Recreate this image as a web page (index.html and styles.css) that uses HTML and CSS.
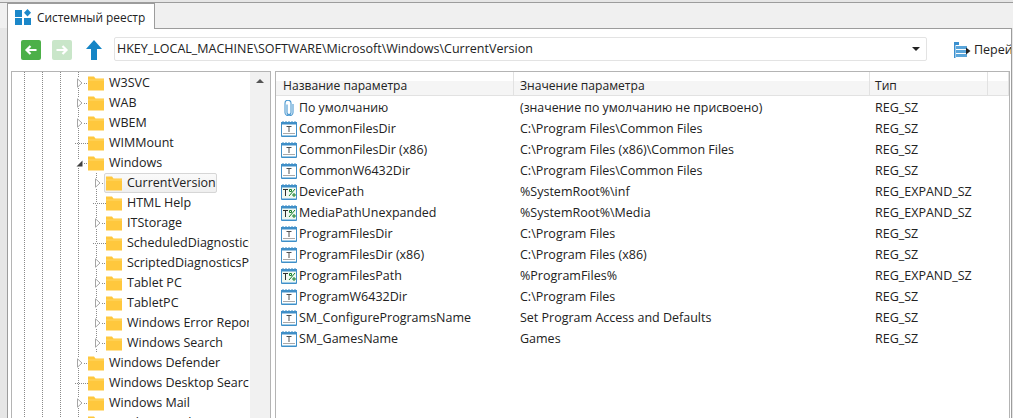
FILE: index.html
```html
<!DOCTYPE html>
<html lang="ru">
<head>
<meta charset="utf-8">
<title>Системный реестр</title>
<link rel="stylesheet" href="styles.css">
</head>
<body>
<svg class="defs" width="0" height="0">
  <symbol id="folder" viewBox="0 0 16 16">
    <path d="M0 1.500h6l1.500 2H16v12H0z" fill="#ffc83d"/>
    <path d="M0 5h16" stroke="#ffd769" stroke-width="1"/>
  </symbol>
  <symbol id="closed" viewBox="0 0 13 10">
    <path d="M2.500.8 7 5 2.500 9.200z" fill="#fff" stroke="#a6a6a6"/>
    <path d="M9 5.500h1M11 5.500h1" stroke="#8a8a8a"/>
  </symbol>
  <symbol id="open" viewBox="0 0 13 7">
    <path d="M7.500.5v6h-6z" fill="#404040"/>
    <path d="M9 3.500h1M11 3.500h1" stroke="#8a8a8a"/>
  </symbol>
  <symbol id="txt" viewBox="0 0 16 16">
    <path d="M.5 2.500h15v13H.5z" fill="#fff" stroke="#3f8fc8"/>
    <path d="M0 1h16v2.500H0z" fill="#3f8fc8"/>
    <path d="M2 0v1M5 0v1M8 0v1M11 0v1M14 0v1" stroke="#3f8fc8"/>
    <path d="M2 12.500h12" stroke="#a9a9a9"/>
    <path d="M1 14.500h14" stroke="#9ccbe8"/>
    <path d="M5.500 5.500h5M8 5.500V11" stroke="#505050"/>
  </symbol>
  <symbol id="exp" viewBox="0 0 16 16">
    <path d="M.5 2.500h15v13H.5z" fill="#f1f9f1" stroke="#3f8fc8"/>
    <path d="M0 1h16v2.500H0z" fill="#3f8fc8"/>
    <path d="M2 0v1M5 0v1M8 0v1M11 0v1M14 0v1" stroke="#3f8fc8"/>
    <path d="M1 14.500h14" stroke="#9ccbe8"/>
    <path d="M2 5.500h5M4.500 5.500V12" stroke="#303030"/>
    <path d="M8 12l6-7M8.500 5.500h2v2h-2zM12 10h2v2h-2z" stroke="#17802f" fill="none"/>
  </symbol>
  <symbol id="clip" viewBox="0 0 16 16">
    <path d="M6 4.500v8a2 2 0 0 0 4 0V3a3 2.700 0 0 0-6 0v9.500a4 3.300 0 0 0 8 0V4" fill="none" stroke="#4a98d0" stroke-width="1.100"/>
  </symbol>
</svg>

<div class="window">
  <div class="tabstrip">
    <div class="tab">
      <svg class="tab-icon" viewBox="0 0 16 16" width="16" height="16">
        <path d="M0 1h7v7H0zM0 9h7v7H0zM9 9h7v7H9z" fill="#1b87c9"/>
        <path d="M12.500 0 16 3.700 12.500 7.400 9 3.700z" fill="#1b87c9"/>
      </svg>
      <span>Системный реестр</span>
    </div>
  </div>
  <div class="page">
    <div class="toolbar">
      <button class="nav back" type="button" aria-label="Назад">
        <svg viewBox="0 0 20 20" width="20" height="20"><path d="M15.500 10H6M9.500 6 5.500 10l4 4" fill="none" stroke="#fff" stroke-width="2.200"/></svg>
      </button>
      <button class="nav fwd" type="button" aria-label="Вперёд">
        <svg viewBox="0 0 20 20" width="20" height="20"><path d="M4.500 10H14M10.500 6l4 4-4 4" fill="none" stroke="#fff" stroke-width="2.200"/></svg>
      </button>
      <svg class="up" viewBox="0 0 16 20" width="16" height="20"><path d="M8 0 16 9H11V20H5V9H0z" fill="#1585c6"/></svg>
      <div class="path">
        <span class="path-text">HKEY_LOCAL_MACHINE\SOFTWARE\Microsoft\Windows\CurrentVersion</span>
        <span class="caret"></span>
      </div>
      <div class="jump">
        <svg viewBox="0 0 17 17" width="17" height="17">
          <path d="M0 0h5v3H0zM0 3h1.500v13H0z" fill="#3a8fcf"/>
          <path d="M2 4h11v3H2zM2 8h11v3H2zM2 12h11v3H2z" fill="#5aa5da"/>
          <path d="M12 5.500 16.500 9 12 12.500z" fill="#222"/>
        </svg>
        <span>Перейти</span>
      </div>
    </div>
    <div class="panes">
      <div class="treepane">
        <div class="tree">
          <div class="row l1"><svg class="tw"><use href="#closed"/></svg><svg class="fld"><use href="#folder"/></svg><span>W3SVC</span></div>
          <div class="row l1"><svg class="tw"><use href="#closed"/></svg><svg class="fld"><use href="#folder"/></svg><span>WAB</span></div>
          <div class="row l1"><svg class="tw"><use href="#closed"/></svg><svg class="fld"><use href="#folder"/></svg><span>WBEM</span></div>
          <div class="row l1 leaf"><i class="tw"></i><svg class="fld"><use href="#folder"/></svg><span>WIMMount</span></div>
          <div class="row l1"><svg class="tw small"><use href="#open"/></svg><svg class="fld"><use href="#folder"/></svg><span>Windows</span></div>
          <div class="kids">
            <div class="row l2 sel"><svg class="tw"><use href="#closed"/></svg><div class="selbox"><svg class="fld"><use href="#folder"/></svg><span>CurrentVersion</span></div></div>
            <div class="row l2 leaf"><i class="tw"></i><svg class="fld"><use href="#folder"/></svg><span>HTML Help</span></div>
            <div class="row l2"><svg class="tw"><use href="#closed"/></svg><svg class="fld"><use href="#folder"/></svg><span>ITStorage</span></div>
            <div class="row l2 leaf"><i class="tw"></i><svg class="fld"><use href="#folder"/></svg><span>ScheduledDiagnostics</span></div>
            <div class="row l2"><svg class="tw"><use href="#closed"/></svg><svg class="fld"><use href="#folder"/></svg><span>ScriptedDiagnosticsProvider</span></div>
            <div class="row l2"><svg class="tw"><use href="#closed"/></svg><svg class="fld"><use href="#folder"/></svg><span>Tablet PC</span></div>
            <div class="row l2"><svg class="tw"><use href="#closed"/></svg><svg class="fld"><use href="#folder"/></svg><span>TabletPC</span></div>
            <div class="row l2"><svg class="tw"><use href="#closed"/></svg><svg class="fld"><use href="#folder"/></svg><span>Windows Error Reporting</span></div>
            <div class="row l2"><svg class="tw"><use href="#closed"/></svg><svg class="fld"><use href="#folder"/></svg><span>Windows Search</span></div>
          </div>
          <div class="row l1"><svg class="tw"><use href="#closed"/></svg><svg class="fld"><use href="#folder"/></svg><span>Windows Defender</span></div>
          <div class="row l1 leaf"><i class="tw"></i><svg class="fld"><use href="#folder"/></svg><span>Windows Desktop Search</span></div>
          <div class="row l1"><svg class="tw"><use href="#closed"/></svg><svg class="fld"><use href="#folder"/></svg><span>Windows Mail</span></div>
          <div class="row l1"><svg class="tw"><use href="#closed"/></svg><svg class="fld"><use href="#folder"/></svg><span>Windows Media</span></div>
        </div>
        <div class="scroll"><span class="scroll-up"></span></div>
      </div>
      <div class="listpane">
        <div class="lrow head">
          <div class="c1">Название параметра</div>
          <div class="c2">Значение параметра</div>
          <div class="c3">Тип</div>
          <div class="c4"></div>
        </div>
        <div class="lrow"><div class="c1"><svg class="ic"><use href="#clip"/></svg><span class="ru">По умолчанию</span></div><div class="c2"><span class="ru">(значение по умолчанию не присвоено)</span></div><div class="c3">REG_SZ</div></div>
        <div class="lrow"><div class="c1"><svg class="ic"><use href="#txt"/></svg>CommonFilesDir</div><div class="c2">C:\Program Files\Common Files</div><div class="c3">REG_SZ</div></div>
        <div class="lrow"><div class="c1"><svg class="ic"><use href="#txt"/></svg>CommonFilesDir (x86)</div><div class="c2">C:\Program Files (x86)\Common Files</div><div class="c3">REG_SZ</div></div>
        <div class="lrow"><div class="c1"><svg class="ic"><use href="#txt"/></svg>CommonW6432Dir</div><div class="c2">C:\Program Files\Common Files</div><div class="c3">REG_SZ</div></div>
        <div class="lrow"><div class="c1"><svg class="ic"><use href="#exp"/></svg>DevicePath</div><div class="c2">%SystemRoot%\inf</div><div class="c3">REG_EXPAND_SZ</div></div>
        <div class="lrow"><div class="c1"><svg class="ic"><use href="#exp"/></svg>MediaPathUnexpanded</div><div class="c2">%SystemRoot%\Media</div><div class="c3">REG_EXPAND_SZ</div></div>
        <div class="lrow"><div class="c1"><svg class="ic"><use href="#txt"/></svg>ProgramFilesDir</div><div class="c2">C:\Program Files</div><div class="c3">REG_SZ</div></div>
        <div class="lrow"><div class="c1"><svg class="ic"><use href="#txt"/></svg>ProgramFilesDir (x86)</div><div class="c2">C:\Program Files (x86)</div><div class="c3">REG_SZ</div></div>
        <div class="lrow"><div class="c1"><svg class="ic"><use href="#exp"/></svg>ProgramFilesPath</div><div class="c2">%ProgramFiles%</div><div class="c3">REG_EXPAND_SZ</div></div>
        <div class="lrow"><div class="c1"><svg class="ic"><use href="#txt"/></svg>ProgramW6432Dir</div><div class="c2">C:\Program Files</div><div class="c3">REG_SZ</div></div>
        <div class="lrow"><div class="c1"><svg class="ic"><use href="#txt"/></svg>SM_ConfigureProgramsName</div><div class="c2">Set Program Access and Defaults</div><div class="c3">REG_SZ</div></div>
        <div class="lrow"><div class="c1"><svg class="ic"><use href="#txt"/></svg>SM_GamesName</div><div class="c2">Games</div><div class="c3">REG_SZ</div></div>
      </div>
    </div>
  </div>
</div>
</body>
</html>
```

FILE: styles.css
```css
* { box-sizing: border-box; }
html, body { margin: 0; height: 100%; overflow: hidden; background: #fff; }
body { font: 12.5px/20px "Open Sans", "Noto Sans", sans-serif; color: #222; }
.defs { display: block; height: 0; overflow: hidden; }
.ru { font-size: 12.3px; }
.window {
  width: 1013px; height: 418px; overflow: hidden;
  background: #e6e6e6; padding: 2px 0 0 7px;
  display: flex; flex-direction: column;
}
.tabstrip {
  height: 26px; flex: none; margin-left: -7px; padding-left: 7px;
  border-top: 1px solid #9c9c9c; background: #f0f0f0; display: flex; position: relative; z-index: 1;
}
.tab {
  width: 148px; height: 26px; background: #fff; border: 1px solid #9c9c9c; border-bottom: 0;
  display: flex; align-items: center; padding-left: 7px; gap: 6px; font-size: 11.9px;
}
.tab-icon { flex: none; }
.page {
  flex: 1; min-height: 0; background: #fff; margin-right: 1px;
  border: 1px solid #9c9c9c; border-bottom: 0; display: flex; flex-direction: column;
  padding: 0 0 0 3px;
}
.toolbar { height: 42px; flex: none; display: flex; align-items: center; padding-left: 10px; overflow: hidden; }
.nav { width: 20px; height: 20px; padding: 0; border: 0; border-radius: 2px; display: block; flex: none; }
.back { background: #4cb048; }
.fwd { background: #c9e6c9; margin-left: 11px; }
.up { margin-left: 14px; flex: none; }
.path {
  width: 813px; height: 24px; margin: 0 0 2px 12px; flex: none; border: 1px solid #e3e3e3; border-radius: 2px;
  display: flex; align-items: center; justify-content: space-between; padding: 0 6px 0 2px;
}
.path-text { white-space: nowrap; }
.caret { width: 0; height: 0; border: 4px solid transparent; border-top: 4px solid #222; border-bottom: 0; }
.jump { display: flex; align-items: center; gap: 3px; margin-left: 27px; white-space: nowrap; }
.jump svg { flex: none; }
.panes { flex: 1; min-height: 0; display: flex; gap: 4px; }
.treepane {
  width: 260px; flex: none; border: 1px solid #b4b4b4; border-bottom: 0; display: flex; overflow: hidden;
}
.tree {
  width: 238px; flex: none; overflow: hidden; padding-top: 1px;
  background-image:
    linear-gradient(#8a8a8a 50%, transparent 50%),
    linear-gradient(#8a8a8a 50%, transparent 50%),
    linear-gradient(#8a8a8a 50%, transparent 50%),
    linear-gradient(#8a8a8a 50%, transparent 50%);
  background-size: 1px 2px;
  background-repeat: repeat-y;
  background-position: 12px 0, 30px 0, 48px 0, 66px 0;
}
.kids {
  background-image: linear-gradient(#8a8a8a 50%, transparent 50%);
  background-size: 1px 2px; background-repeat: repeat-y; background-position: 84px 0;
}
.row { height: 20px; display: flex; align-items: center; white-space: nowrap; color: #222; margin-right: 1px; overflow: hidden; }
.sel { overflow: visible; }
.row.l1 { padding-left: 63px; }
.row.l2 { padding-left: 81px; }
.tw { width: 13px; height: 10px; flex: none; background: #fff; overflow: visible; }
.tw.small { height: 7px; }
i.tw { height: 1px; background: repeating-linear-gradient(90deg, #8a8a8a 0 1px, #fff 1px 2px); }
.fld { width: 16px; height: 16px; flex: none; margin-right: 5px; }
.selbox {
  display: flex; align-items: center; height: 20px; width: 113px; margin-left: -2px; padding-left: 1px;
  border: 1px solid #d6d6d6; border-radius: 2px; background: linear-gradient(#fafafa, #efefef);
  flex: none;
}
.scroll { width: 20px; flex: none; background: #f1f1f1; text-align: center; padding-top: 7px; line-height: 0; }
.scroll-up { display: inline-block; border: 4px solid transparent; border-bottom: 4px solid #555; border-top: 0; }
.listpane { flex: 1; min-width: 0; border: 1px solid #b4b4b4; border-bottom: 0; margin-right: 1px; overflow: hidden; }
.lrow { height: 21px; display: flex; align-items: center; white-space: nowrap; }
.c1 { width: 238px; flex: none; display: flex; align-items: center; padding-left: 5px; }
.c2 { width: 356px; flex: none; padding-left: 6px; }
.c3 { width: 118px; flex: none; padding-left: 5px; }
.c4 { flex: 1; }
.head {
  height: 24px; background: linear-gradient(#fff 38%, #f5f5f5 38%); border-bottom: 1px solid #e2e2e2; margin-bottom: 1px;
  font-size: 12.1px;
}
.head > div { height: 100%; line-height: 27px; border-right: 1px solid #e2e2e2; padding-left: 7px; }
.head > .c1 { align-items: flex-start; }
.head > .c2 { padding-left: 6px; }
.head > .c3 { padding-left: 5px; }
.ic { width: 16px; height: 16px; flex: none; margin-right: 2px; }
```
